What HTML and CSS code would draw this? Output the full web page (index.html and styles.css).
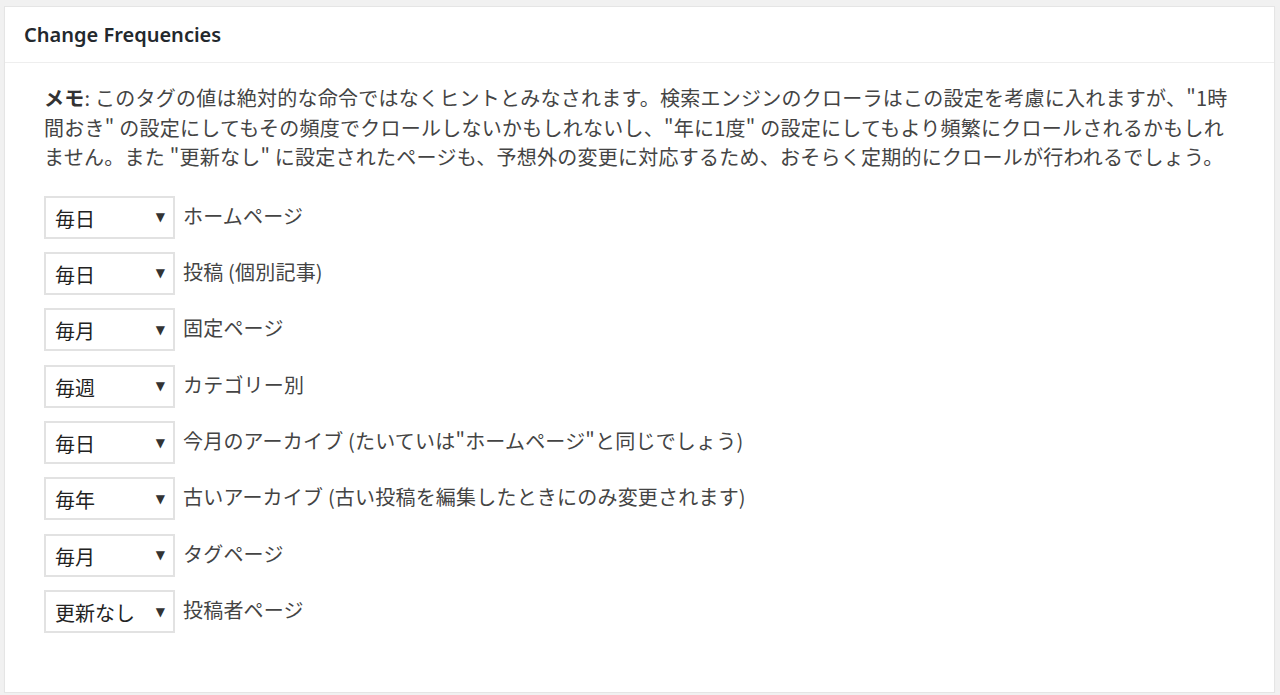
FILE: index.html
```html
<!DOCTYPE html>
<html lang="ja">
<head>
<meta charset="utf-8">
<link rel="stylesheet" href="styles.css">
</head>
<body>
<div class="panel">
  <div class="panel-head"><h3 class="title">Change Frequencies</h3></div>
  <div class="panel-body">
    <p class="note"><b>メモ</b>: このタグの値は絶対的な命令ではなくヒントとみなされます。検索エンジンのクローラはこの設定を考慮に入れますが、"1時間おき" の設定にしてもその頻度でクロールしないかもしれないし、"年に1度" の設定にしてもより頻繁にクロールされるかもしれません。また "更新なし" に設定されたページも、予想外の変更に対応するため、おそらく定期的にクロールが行われるでしょう。</p>
    <ul class="rows">
      <li class="row"><span class="sel"><span class="val">毎日</span><span class="arrow">▼</span></span><span class="lbl">ホームページ</span></li>
      <li class="row"><span class="sel"><span class="val">毎日</span><span class="arrow">▼</span></span><span class="lbl">投稿 (個別記事)</span></li>
      <li class="row"><span class="sel"><span class="val">毎月</span><span class="arrow">▼</span></span><span class="lbl">固定ページ</span></li>
      <li class="row"><span class="sel"><span class="val">毎週</span><span class="arrow">▼</span></span><span class="lbl">カテゴリー別</span></li>
      <li class="row"><span class="sel"><span class="val">毎日</span><span class="arrow">▼</span></span><span class="lbl">今月のアーカイブ (たいていは"ホームページ"と同じでしょう)</span></li>
      <li class="row"><span class="sel"><span class="val">毎年</span><span class="arrow">▼</span></span><span class="lbl">古いアーカイブ (古い投稿を編集したときにのみ変更されます)</span></li>
      <li class="row"><span class="sel"><span class="val">毎月</span><span class="arrow">▼</span></span><span class="lbl">タグページ</span></li>
      <li class="row"><span class="sel"><span class="val">更新なし</span><span class="arrow">▼</span></span><span class="lbl">投稿者ページ</span></li>
    </ul>
  </div>
</div>
</body>
</html>
```

FILE: styles.css
```css
html, body {
  margin: 0;
  padding: 0;
  background: #f1f1f1;
}
body {
  font-family: "Noto Sans", "Noto Sans CJK JP", sans-serif;
  color: #444;
}
.panel {
  box-sizing: border-box;
  margin: 6px 5px 0 4px;
  height: 687px;
  background: #fff;
  border: 1px solid #e5e5e5;
  box-shadow: 0 1px 1px rgba(0,0,0,0.04);
}
.panel-head {
  box-sizing: border-box;
  height: 56px;
  border-bottom: 1px solid #eee;
  display: flex;
  align-items: center;
  padding-left: 19px;
}
.title {
  margin: 0;
  font-size: 20px;
  font-weight: 600;
  color: #23282d;
  font-family: "Noto Sans", "Open Sans", sans-serif;
}
.panel-body {
  padding: 0 39px;
}
.note {
  margin: 20px 0 0;
  font-size: 20px;
  line-height: 29.5px;
  font-family: "Noto Sans CJK JP", sans-serif;
  color: #444;
  letter-spacing: 0.25px;
}
.note b {
  font-weight: 700;
  color: #333;
}
.rows {
  list-style: none;
  margin: 24px 0 0;
  padding: 0;
  display: flex;
  flex-direction: column;
  gap: 13.4px;
}
.row {
  display: flex;
  align-items: center;
  gap: 8px;
}
.sel {
  box-sizing: border-box;
  width: 131px;
  height: 43px;
  border: 2px solid #e2e2e2;
  background: #fff;
  display: flex;
  align-items: center;
  justify-content: space-between;
  padding: 0 8px 0 9px;
  font-family: "Noto Sans CJK JP", sans-serif;
  font-size: 20px;
  color: #222;
}
.val {
  position: relative;
  top: 1px;
}
.arrow {
  font-size: 12px;
  color: #333;
  font-family: "DejaVu Sans", sans-serif;
}
.lbl {
  font-family: "Noto Sans CJK JP", sans-serif;
  font-size: 20px;
  color: #444;
  letter-spacing: 0.2px;
  position: relative;
  top: -2px;
}
```
